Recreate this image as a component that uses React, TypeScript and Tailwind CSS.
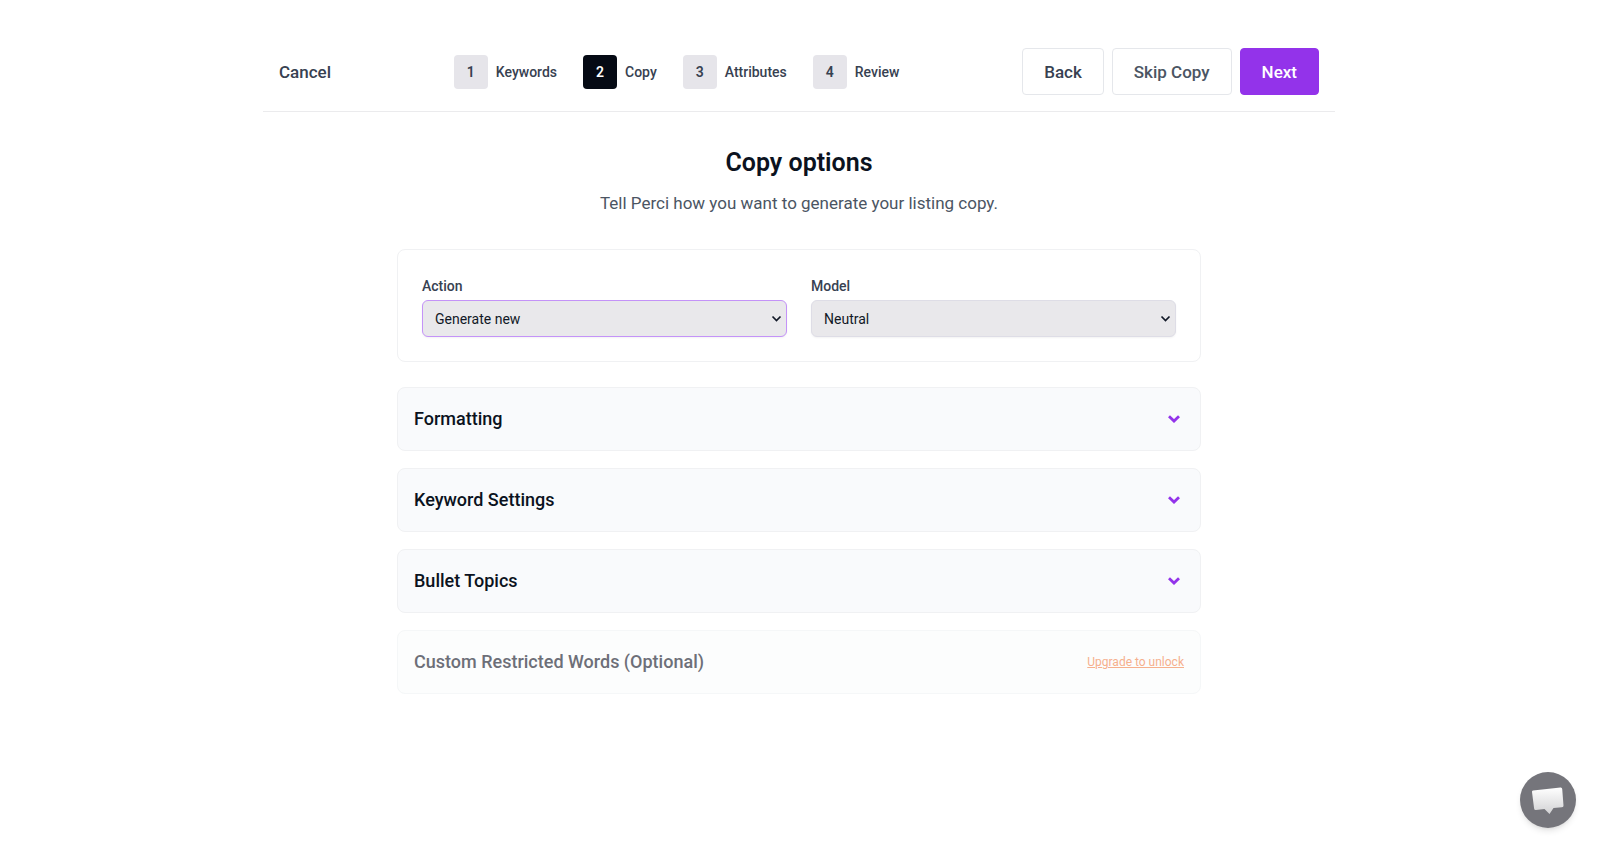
import { useState } from "react";

const steps = ["Keywords", "Copy", "Attributes", "Review"];
const sections = ["Formatting", "Keyword Settings", "Bullet Topics"];

const selects = [
  { id: "action", label: "Action", options: ["Generate new", "Improve existing"], border: "border-[#c493f8]" },
  { id: "model", label: "Model", options: ["Neutral", "Creative"], border: "border-[#dedde6]" },
];

function Header({ current }: { current: number }) {
  return (
    <header className="mx-auto flex w-full max-w-[1072px] items-center justify-between border-b border-[#ebebed] px-4 pb-4 pt-12 font-medium text-[#374151]">
      <button type="button" className="text-[17px] leading-6">Cancel</button>
      <ol className="flex items-center gap-[26px]">
        {steps.map((step, i) => (
          <li key={step} className="flex items-center gap-2 text-sm">
            <span className={`flex size-[34px] items-center justify-center rounded font-semibold ${i === current ? "bg-[#050a14] text-white" : "bg-[#e6e5ea]"}`}>{i + 1}</span>
            {step}
          </li>
        ))}
      </ol>
      <div className="flex gap-2 text-[17px] leading-6">
        <button type="button" className="h-[47px] rounded border border-[#e5e7eb] px-[21px]">Back</button>
        <button type="button" className="h-[47px] rounded border border-[#e5e7eb] px-[21px] text-[#4b5563]">Skip Copy</button>
        <button type="button" className="h-[47px] rounded border border-[#9333ea] bg-[#9333ea] px-[21px] text-white">Next</button>
      </div>
    </header>
  );
}

function SelectField({ id, label, options, border }: (typeof selects)[number]) {
  return (
    <div>
      <label htmlFor={id} className="block text-sm font-medium text-[#374151]">{label}</label>
      <div className="relative mt-1">
        <select id={id} className={`block h-[37px] w-full appearance-none rounded-md border bg-[#e9e8eb] px-3 text-sm text-[#111827] shadow-xs ${border}`}>
          {options.map((option) => <option key={option}>{option}</option>)}
        </select>
        <svg className="pointer-events-none absolute right-1 top-3.5 h-2.5 w-3" viewBox="0 0 12 10" fill="none" stroke="#111827" strokeWidth="1.7">
          <path d="M1.500 2.500 5.500 6.500 9.500 2.500" />
        </svg>
      </div>
    </div>
  );
}

function Section({ title }: { title: string }) {
  const [open, setOpen] = useState(false);
  return (
    <button type="button" aria-expanded={open} onClick={() => setOpen(!open)} className="flex h-16 w-full items-center justify-between rounded-lg border border-[#f0f1f3] bg-[#f9fafc] px-4 text-left text-lg font-medium text-[#0b1220]">
      {title}
      <svg className={`size-5 text-[#9333ea] ${open ? "rotate-180" : ""}`} viewBox="0 0 20 20" fill="none" stroke="currentColor" strokeWidth="2.8">
        <path d="M5 7.2 10 12 15 7.2" />
      </svg>
    </button>
  );
}

export default function App() {
  return (
    <div className="min-h-screen bg-white pr-0.5 font-['Roboto',sans-serif]">
      <Header current={1} />
      <main className="mx-auto w-full max-w-[804px] pb-36">
        <h1 className="pt-[35px] text-center text-[25px] font-semibold leading-8 text-[#0b1220]">Copy options</h1>
        <p className="mt-3 text-center text-[17px] leading-6 text-[#4b5563]">Tell Perci how you want to generate your listing copy.</p>
        <div className="mt-[34px] grid grid-cols-2 gap-6 rounded-lg border border-[#f0f1f3] px-6 pb-6 pt-[26px]">
          {selects.map((field) => <SelectField key={field.id} {...field} />)}
        </div>
        <div className="mt-[25px] flex flex-col gap-[17px]">
          {sections.map((title) => <Section key={title} title={title} />)}
          <div className="flex h-16 items-center justify-between rounded-lg border border-[#f5f7f8] bg-[#fcfdfd] px-4">
            <h2 className="text-lg font-medium text-[#6d6f78]">Custom Restricted Words (Optional)</h2>
            <a href="#upgrade" className="text-xs text-[#f6b08d] underline">Upgrade to unlock</a>
          </div>
        </div>
      </main>
      <button type="button" aria-label="Open chat" className="fixed bottom-[19px] right-6 size-14 rounded-full bg-[#75757b] shadow-md shadow-black/10">
        <svg className="size-full" viewBox="0 0 56 56">
          <defs>
            <linearGradient id="bubble" x1="0" y1="0" x2="0" y2="1">
              <stop offset="0" stopColor="#fff" />
              <stop offset="1" stopColor="#d2d2d4" />
            </linearGradient>
          </defs>
          <path fill="url(#bubble)" d="M13 18.500 40.500 15.500Q42 15.300 42.200 17L43.500 33.500Q43.600 35 42 35.200L33.500 36 29.500 42 24.500 37 16 38Q14.300 38.200 14.100 36.500L12 20Q11.800 18.700 13 18.500Z" />
        </svg>
      </button>
    </div>
  );
}
